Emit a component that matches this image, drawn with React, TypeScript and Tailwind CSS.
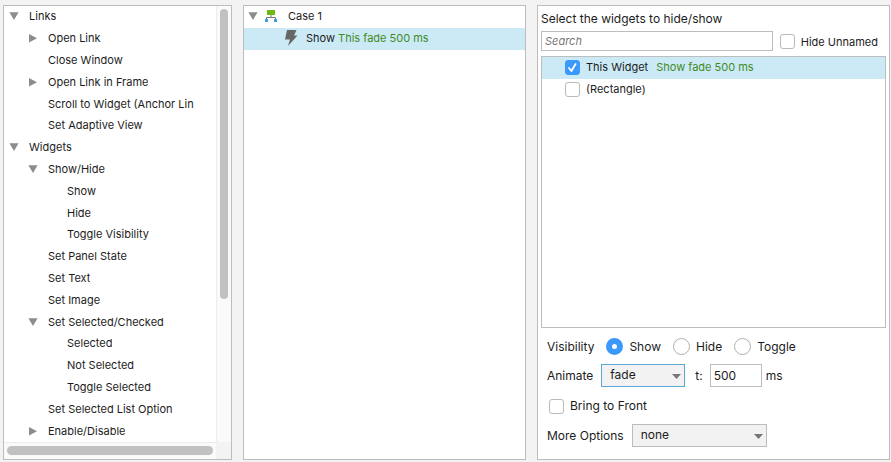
import { useState, type ReactNode } from "react";

type TreeItem = { label: string; level: 0 | 1 | 2; state?: "open" | "closed" };

const ITEMS: TreeItem[] = [
  { label: "Links", level: 0, state: "open" },
  { label: "Open Link", level: 1, state: "closed" },
  { label: "Close Window", level: 1 },
  { label: "Open Link in Frame", level: 1, state: "closed" },
  { label: "Scroll to Widget (Anchor Link)", level: 1 },
  { label: "Set Adaptive View", level: 1 },
  { label: "Widgets", level: 0, state: "open" },
  { label: "Show/Hide", level: 1, state: "open" },
  { label: "Show", level: 2 },
  { label: "Hide", level: 2 },
  { label: "Toggle Visibility", level: 2 },
  { label: "Set Panel State", level: 1 },
  { label: "Set Text", level: 1 },
  { label: "Set Image", level: 1 },
  { label: "Set Selected/Checked", level: 1, state: "open" },
  { label: "Selected", level: 2 },
  { label: "Not Selected", level: 2 },
  { label: "Toggle Selected", level: 2 },
  { label: "Set Selected List Option", level: 1 },
  { label: "Enable/Disable", level: 1, state: "closed" },
];

const INDENT = { 0: "pl-1", 1: "pl-[23px]", 2: "pl-[42px]" };

function Triangle({ state }: { state?: "open" | "closed" }) {
  return (
    <svg className="size-3 shrink-0 fill-[#8c8c8c]" viewBox="0 0 12 12" aria-hidden="true">
      {state === "open" && <path d="M1.4 2.2h9.2L6 10z" />}
      {state === "closed" && <path d="M2 2v8.4L10 6.2z" />}
    </svg>
  );
}

function Check({ label, on = false, children }: { label: string; on?: boolean; children?: ReactNode }) {
  const [checked, setChecked] = useState(on);
  return (
    <label className="flex items-center gap-[6px] whitespace-nowrap">
      <span className="relative size-[15px] shrink-0">
        <input
          type="checkbox"
          aria-label={label}
          checked={checked}
          onChange={(e) => setChecked(e.target.checked)}
          className="block size-[15px] appearance-none rounded-[3px] border border-[#b9b9b9] bg-white checked:border-[#3b99fc] checked:bg-[#3b99fc]"
        />
        {checked && (
          <svg className="pointer-events-none absolute inset-0" viewBox="0 0 15 15" fill="none" stroke="#fff" strokeWidth="1.8" strokeLinecap="round" strokeLinejoin="round">
            <path d="M4 8l2.4 3L10.6 4" />
          </svg>
        )}
      </span>
      {children}
    </label>
  );
}

function Radio({ label, on = false }: { label: string; on?: boolean }) {
  return (
    <label className="flex items-center gap-[6px]">
      <input
        type="radio"
        name="visibility"
        defaultChecked={on}
        className="size-[17px] appearance-none rounded-full border border-[#b0b0b0] bg-white checked:border-[6px] checked:border-[#3b99fc]"
      />
      {label}
    </label>
  );
}

function Select({ id, options, className }: { id: string; options: string[]; className: string }) {
  return (
    <span className="relative">
      <select id={id} className={`block h-[23px] appearance-none border bg-[#f2f2f2] pl-2 pb-px text-xs ${className}`}>
        {options.map((o) => (
          <option key={o}>{o}</option>
        ))}
      </select>
      <svg className="pointer-events-none absolute top-[10px] right-1 h-[5px] w-[9px] fill-[#777]" viewBox="0 0 9 5" aria-hidden="true">
        <path d="M0 0h9L4.5 5z" />
      </svg>
    </span>
  );
}

function ActionTree() {
  return (
    <section className="grid grid-cols-[1fr_15px] grid-rows-[1fr_17px] overflow-hidden border border-[#bdbdbd] bg-white">
      <ul className="flex min-w-0 flex-col pr-[22px]">
        {ITEMS.map((item) => (
          <li key={item.label} className={`flex flex-1 basis-[21px] items-center gap-[9px] pb-px ${INDENT[item.level]}`}>
            <Triangle state={item.state} />
            <span className="overflow-hidden whitespace-nowrap">{item.label}</span>
          </li>
        ))}
      </ul>
      <div className="border-l border-[#ececec] bg-[#fafafa] px-[3px] pt-[3px]">
        <div className="h-[67%] w-2 rounded-full bg-[#c1c1c1]" />
      </div>
      <div className="border-t border-[#ececec] bg-[#fafafa] pt-[3px] pr-[3px] pl-[3px]">
        <div className="h-[9px] rounded-full bg-[#c1c1c1]" />
      </div>
      <div className="bg-[#f3f3f3]" />
    </section>
  );
}

function CasePanel() {
  return (
    <section className="border border-[#bdbdbd] bg-white">
      <div className="flex h-[22px] items-center pb-[2px] pl-[3px]">
        <Triangle state="open" />
        <svg className="ml-[5px] size-[14px]" viewBox="0 0 14 14" aria-hidden="true">
          <path d="M3 1h8v5H3z" fill="#6fb90f" />
          <path d="M7 6v2.5M2.5 10V8.5h9V10" fill="none" stroke="#777" />
          <path d="M1 10h3v3H1zM10 10h3v3h-3z" fill="#3d9fe0" />
        </svg>
        <span className="ml-[10px]">Case 1</span>
      </div>
      <div className="flex h-[22px] items-center gap-2 bg-[#cbeaf6] pb-[2px] pl-10">
        <svg className="h-4 w-[14px] fill-[#666]" viewBox="0 0 14 16" aria-hidden="true">
          <path d="M3 0h9.5L10 5.5h3.5L4 16l2-6.5H1z" />
        </svg>
        <span>
          Show <span className="text-[#438a1f]">This fade 500 ms</span>
        </span>
      </div>
    </section>
  );
}

function SettingsPanel() {
  return (
    <section className="flex flex-col border border-[#bdbdbd] bg-white px-[3px] pt-[3px] pb-3 text-xs">
      <h2 className="flex h-[22px] items-center pb-[3px]">Select the widgets to hide/show</h2>
      <div className="flex items-center gap-[7px] pr-2 text-[11px]">
        <input
          type="text"
          aria-label="Search"
          placeholder="Search"
          className="h-5 min-w-0 flex-1 border border-[#bdbdbd] px-[3px] placeholder:text-[#777] placeholder:italic"
        />
        <Check label="Hide Unnamed">
          <span className="pt-[2px]">Hide Unnamed</span>
        </Check>
      </div>
      <div className="mt-[5px] flex-1 border border-[#bdbdbd] text-[11px]">
        <div className="flex h-[22px] items-center bg-[#cbeaf6] pb-[2px] pl-[23px]">
          <Check label="This Widget" on>
            <span>This Widget</span>
            <span className="pl-[2px] text-[#438a1f]">Show fade 500 ms</span>
          </Check>
        </div>
        <div className="flex h-[22px] items-center pb-[2px] pl-[23px]">
          <Check label="(Rectangle)">(Rectangle)</Check>
        </div>
      </div>
      <fieldset className="mt-[10px] flex h-[17px] items-center gap-3 pl-[6px]">
        <legend className="float-left">Visibility</legend>
        <Radio label="Show" on />
        <Radio label="Hide" />
        <Radio label="Toggle" />
      </fieldset>
      <div className="mt-[9px] flex items-center pl-[6px]">
        <label htmlFor="animate" className="mr-2">Animate</label>
        <Select id="animate" options={["fade", "none"]} className="w-[84px] border-[#5aaad6]" />
        <label htmlFor="time" className="mr-[7px] ml-[10px]">t:</label>
        <input id="time" type="text" defaultValue="500" className="h-[23px] w-[52px] border border-[#bdbdbd] px-[3px] pb-px" />
        <span className="ml-1">ms</span>
      </div>
      <div className="mt-[11px] pl-2">
        <Check label="Bring to Front">Bring to Front</Check>
      </div>
      <div className="mt-[10px] flex items-center gap-2 pl-[6px]">
        <label htmlFor="more">More Options</label>
        <Select id="more" options={["none"]} className="w-[135px] border-[#bdbdbd]" />
      </div>
    </section>
  );
}

export default function App() {
  return (
    <main className="grid min-h-screen grid-cols-[229fr_283fr_353fr] gap-[11px] bg-[#f3f3f3] pt-[5px] pr-px pb-[2px] pl-[3px] font-[Inter,'Liberation_Sans',sans-serif] text-[11px] leading-4 text-[#1c1c1c]">
      <ActionTree />
      <CasePanel />
      <SettingsPanel />
    </main>
  );
}
